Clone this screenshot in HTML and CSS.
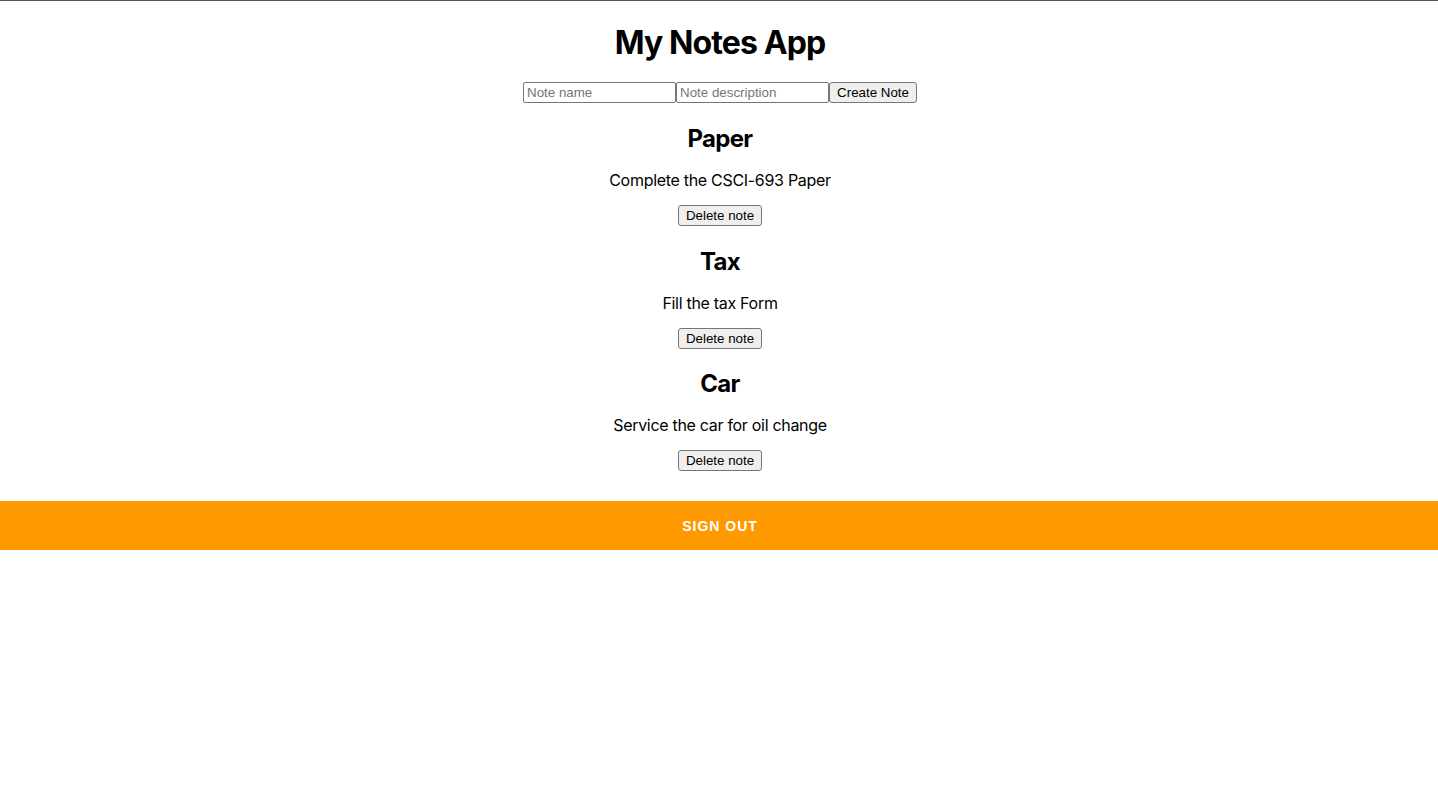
FILE: index.html
```html
<!DOCTYPE html>
<html lang="en">
<head>
<meta charset="utf-8">
<title>My Notes App</title>
<link rel="stylesheet" href="styles.css">
</head>
<body>
<div class="app">
  <h1 class="title">My Notes App</h1>
  <div class="create-form">
    <input class="field" type="text" placeholder="Note name">
    <input class="field" type="text" placeholder="Note description">
    <button class="btn" type="button">Create Note</button>
  </div>
  <div class="notes">
    <div class="note">
      <h2 class="note-name">Paper</h2>
      <p class="note-desc">Complete the CSCI-693 Paper</p>
      <button class="btn" type="button">Delete note</button>
    </div>
    <div class="note">
      <h2 class="note-name">Tax</h2>
      <p class="note-desc">Fill the tax Form</p>
      <button class="btn" type="button">Delete note</button>
    </div>
    <div class="note">
      <h2 class="note-name">Car</h2>
      <p class="note-desc">Service the car for oil change</p>
      <button class="btn" type="button">Delete note</button>
    </div>
  </div>
  <button class="sign-out" type="button">Sign Out</button>
</div>
</body>
</html>
```
FILE: styles.css
```css
html, body {
  margin: 0;
  padding: 0;
  background: #ffffff;
}
body {
  border-top: 1px solid #555555;
  font-family: Inter, "Noto Sans", sans-serif;
  color: #000000;
}
.app {
  text-align: center;
}
.title {
  font-size: 32px;
  font-weight: 700;
  line-height: 39px;
  letter-spacing: -0.9px;
  margin: 22px 0 20px;
  padding-left: 2px;
}
.create-form {
  display: flex;
  justify-content: center;
  height: 21px;
  padding-left: 2px;
}
.field {
  box-sizing: border-box;
  width: 153px;
  height: 21px;
  margin: 0;
  padding: 1px 3px;
  border: 1px solid #767676;
  border-radius: 2px;
  font-family: "Liberation Sans", Arial, sans-serif;
  font-size: 13.333px;
  color: #000;
  background: #fff;
}
.field::placeholder {
  color: #757575;
}
.btn {
  box-sizing: border-box;
  height: 21px;
  margin: 0;
  padding: 1px 7px;
  border: 1px solid #767676;
  border-radius: 3px;
  background: #efefef;
  font-family: "Liberation Sans", Arial, sans-serif;
  font-size: 13.333px;
  color: #000;
  line-height: 17px;
}
.notes {
  display: flex;
  flex-direction: column;
  align-items: center;
  padding-left: 2px;
}
.note {
  display: flex;
  flex-direction: column;
  align-items: center;
  padding-top: 22px;
}
.note:last-child {
  padding-top: 21px;
}
.note-name {
  font-size: 24px;
  font-weight: 700;
  line-height: 28px;
  letter-spacing: -0.7px;
  margin: 0 0 17px;
}
.note-desc {
  font-size: 16px;
  line-height: 20px;
  letter-spacing: -0.3px;
  margin: 0 0 15px;
}
.sign-out {
  display: block;
  width: 100%;
  height: 49px;
  margin-top: 30px;
  border: 0;
  padding: 0 0 0 2px;
  background: #ff9900;
  color: #ffffff;
  font-family: "Liberation Sans", Arial, sans-serif;
  font-size: 14px;
  font-weight: 700;
  letter-spacing: 1px;
  text-transform: uppercase;
}
```
